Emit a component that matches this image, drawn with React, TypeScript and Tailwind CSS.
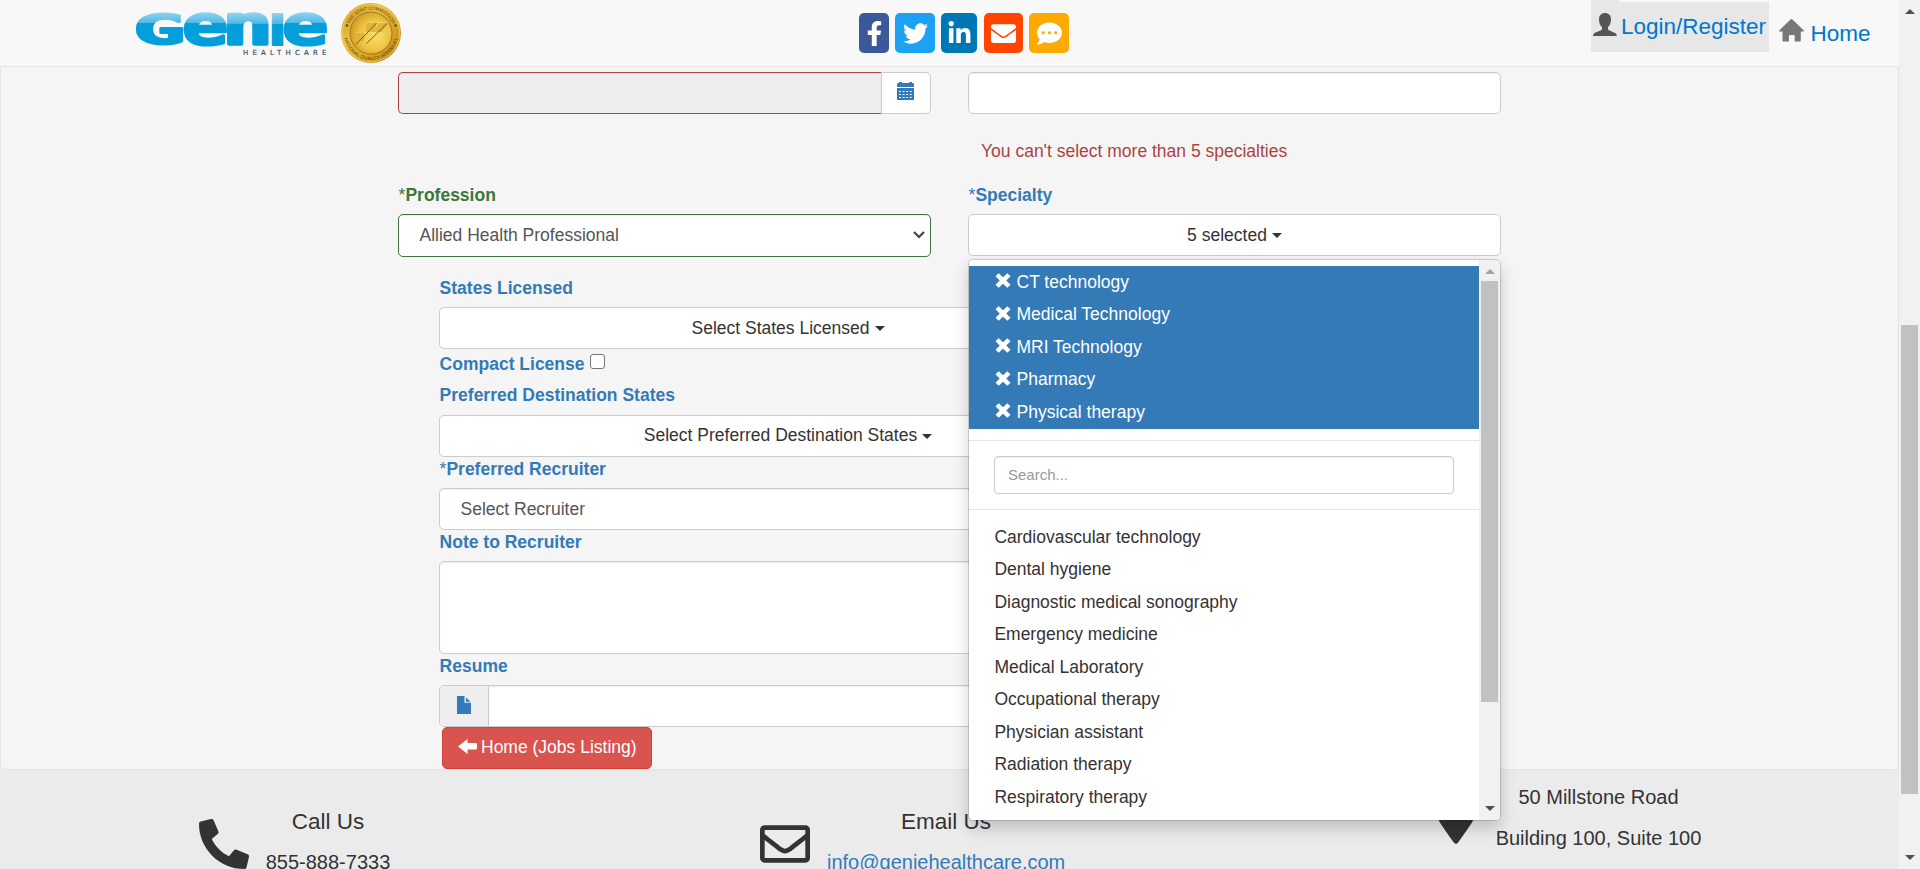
import type { ReactNode } from 'react';
import {
  FaCommentDots,
  FaEnvelope,
  FaFacebookF,
  FaLinkedinIn,
  FaPhone,
  FaRegEnvelope,
  FaTwitter,
} from 'react-icons/fa';

const selectedSpecialties = [
  'CT technology',
  'Medical Technology',
  'MRI Technology',
  'Pharmacy',
  'Physical therapy',
];

const specialties = [
  'Cardiovascular technology',
  'Dental hygiene',
  'Diagnostic medical sonography',
  'Emergency medicine',
  'Medical Laboratory',
  'Occupational therapy',
  'Physician assistant',
  'Radiation therapy',
  'Respiratory therapy',
];

function GenieLogo() {
  const letter = {
    fontFamily: 'DejaVu Sans Mono',
    fontWeight: 700,
    fontSize: 20.48,
    strokeWidth: 1,
    strokeLinejoin: 'round' as const,
  };
  const grad = (id: string, top: number) => (
    <linearGradient id={id} gradientUnits="userSpaceOnUse" x1="0" x2="0" y1={top} y2="0">
      <stop offset="0" stopColor="#8fd3ef" />
      <stop offset="0.33" stopColor="#4fb9e4" />
      <stop offset="0.34" stopColor="#049fdb" />
      <stop offset="1" stopColor="#049fdb" />
    </linearGradient>
  );
  return (
    <svg className="overflow-visible" width="196" height="50" viewBox="0 0 196 50">
      <defs>
        {grad('g1', -15.5)}
        {grad('g2', -11.8)}
        {grad('g3', -11.5)}
        {grad('g4', -15)}
      </defs>
      <g transform="translate(-131 -10)">
        <text {...letter} transform="translate(133 44.2) scale(4.25 2.03)" fill="url(#g1)" stroke="url(#g1)">G</text>
        <text {...letter} transform="translate(182 44.2) scale(3.75 2.66)" fill="url(#g2)" stroke="url(#g2)">e</text>
        <text {...letter} transform="translate(222 44.4) scale(4.15 2.72)" fill="url(#g3)" stroke="url(#g3)">n</text>
        <text {...letter} fontFamily="DejaVu Sans" transform="translate(268.6 44.6) scale(2.35 2.1)" fill="url(#g4)" stroke="url(#g4)">I</text>
        <text {...letter} transform="translate(282 44.2) scale(3.75 2.66)" fill="url(#g2)" stroke="url(#g2)">e</text>
        <text
          x="243"
          y="55"
          fontFamily="DejaVu Sans"
          fontSize="7"
          fill="#3c4650"
          stroke="#3c4650"
          strokeWidth="0.15"
          textLength="83.5"
        >
          HEALTHCARE
        </text>
      </g>
    </svg>
  );
}

function GoldSeal() {
  return (
    <svg width="60" height="60" viewBox="-30 -30 60 60">
      <defs>
        <linearGradient id="ring" x1="0" y1="0" x2="1" y2="1">
          <stop offset="0" stopColor="#c8921c" />
          <stop offset="0.35" stopColor="#e9c044" />
          <stop offset="0.6" stopColor="#dba92c" />
          <stop offset="1" stopColor="#b87f14" />
        </linearGradient>
        <radialGradient id="disc" cx="0.6" cy="0.55" r="0.6">
          <stop offset="0" stopColor="#fbe06a" />
          <stop offset="0.6" stopColor="#ecc444" />
          <stop offset="1" stopColor="#d29c22" />
        </radialGradient>
        <path id="arcTop" d="M-23.2 0A23.2 23.2 0 0 1 23.2 0" />
        <path id="arcBottom" d="M-27 0A27 27 0 0 0 27 0" />
      </defs>
      <circle r="30" fill="url(#ring)" />
      <circle r="28.6" fill="none" stroke="#f0cf62" strokeWidth="0.8" />
      <circle r="21" fill="url(#disc)" stroke="#a87616" strokeWidth="1" />
      <path d="M-5 -11h10v10h-10zM8 -10h9l-6 9h-9zM-16 -1h9v9h-5z" fill="#d9ab33" opacity="0.7" />
      <path d="M-15 11.5L5.500 -10M-4.500 10.500L16 -9.500" stroke="#6b4a10" strokeWidth="0.9" />
      <path d="M-5 -10.500H17M-15 -0.500H-4" stroke="#f7df7c" strokeWidth="0.6" />
      <text fontFamily="Liberation Sans" fontSize="4.600" fill="#5b3f0a">
        <textPath href="#arcTop" startOffset="50%" textAnchor="middle" textLength="54">
          THE JOINT COMMISSION
        </textPath>
      </text>
      <text fontFamily="Liberation Sans" fontSize="4.600" fill="#5b3f0a">
        <textPath href="#arcBottom" startOffset="50%" textAnchor="middle" textLength="74">
          NATIONAL QUALITY APPROVAL
        </textPath>
      </text>
      <circle cx="-24" cy="-7.500" r="1.300" fill="#6b4a10" />
      <circle cx="24.500" cy="-7.500" r="1.300" fill="#6b4a10" />
    </svg>
  );
}

function UserIcon() {
  return (
    <svg width="24" height="23" viewBox="0 0 24 23" fill="#555">
      <path d="M12 0c3.500 0 6 2.300 6 6.200 0 1.300-.1 2-.3 2.600-.2 2.500-1.300 4-2.700 5.200v1.500c0 1 .5 1.600 1.500 2l5 2.200c1.500.7 2.300 1.600 2.300 3V23H.2v-.5c0-1.300.8-2.200 2.300-2.900l5-2.200c1-.4 1.500-1 1.500-2V14c-1.400-1.200-2.500-2.700-2.700-5.200C6.100 8.200 6 7.500 6 6.200 6 2.300 8.500 0 12 0z" />
    </svg>
  );
}

function HomeIcon() {
  return (
    <svg width="25" height="23" viewBox="0 0 25 23" fill="#777">
      <path d="M11.500.6a1.300 1.300 0 0 1 2 0L24.600 11.300c.6.600.4 1.200-.5 1.200h-2.300v8.700c0 .8-.4 1.300-1.300 1.300h-4.800v-5.300c0-.7-.4-1.200-1.200-1.200h-3.400c-.8 0-1.200.5-1.200 1.200v5.300H4.800c-.9 0-1.300-.5-1.300-1.300v-8.700H.9c-.9 0-1.100-.6-.5-1.200z" />
    </svg>
  );
}

function CalendarIcon() {
  return (
    <svg width="17" height="18" viewBox="0 0 17 18" fill="#337ab7">
      <path d="M0 5V2.500C0 1.500.6 1 1.500 1H2V0h3v1h7V0h3v1h.5c1 0 1.500.6 1.500 1.500V5z" />
      <path
        fillRule="evenodd"
        d="M0 6h17v12H0zM2 9v1h2V9zm3.600 0v1h2V9zm3.600 0v1h2V9zm3.600 0v1h2V9zM2 12v1h2v-1zm3.600 0v1h2v-1zm3.600 0v1h2v-1zm3.600 0v1h2v-1zM2 15v1h2v-1zm3.600 0v1h2v-1zm3.600 0v1h2v-1zm3.600 0v1h2v-1z"
      />
    </svg>
  );
}

function FileIcon() {
  return (
    <svg width="14" height="18" viewBox="0 0 14 18" fill="#337ab7">
      <path d="M0 0h7.500v6.800H14V18H0z" />
      <path d="M9 1.500L13.500 5.800H9z" />
    </svg>
  );
}

function RemoveIcon() {
  return (
    <svg width="16" height="15" viewBox="0 0 16 15" fill="#fff">
      <path d="M3.700.3L8 4.300 12.300.3 15.500 3.300 11.300 7.500 15.500 11.700 12.300 14.700 8 10.700 3.700 14.700.5 11.700 4.700 7.500.5 3.300z" />
    </svg>
  );
}

function ArrowLeftIcon() {
  return (
    <svg width="19" height="15" viewBox="0 0 19 15" fill="#fff">
      <path d="M0 7.500L9.500 0v4h8.300c.6 0 1.200.5 1.200 1.200v4.100c0 .7-.5 1.200-1.200 1.200H9.500V15z" />
    </svg>
  );
}

function Caret() {
  return (
    <span className="ml-[5px] inline-block border-x-[5px] border-t-[5px] border-x-transparent border-t-[#333] align-middle" />
  );
}

function ScrollArrow({ down, muted }: { down?: boolean; muted?: boolean }) {
  return (
    <svg width="10" height="5" viewBox="0 0 10 5" fill={muted ? '#a3a3a3' : '#505050'}>
      <path d={down ? 'M0 0h10L5 5z' : 'M0 5h10L5 0z'} />
    </svg>
  );
}

function Label({ children, required, green }: { children: ReactNode; required?: boolean; green?: boolean }) {
  return (
    <div
      className={`mb-[6.25px] h-[25px] pl-[0.6px] font-bold leading-[25px] ${green ? 'text-[#3c763d]' : 'text-[#337ab7]'}`}
    >
      {required && <span className="font-normal">*</span>}
      {children}
    </div>
  );
}

function DropButton({ children }: { children: ReactNode }) {
  return (
    <button className="flex h-[42.5px] w-full items-center justify-center rounded-[5px] border border-[#ccc] bg-white text-[#333]">
      <span>
        {children}
        <Caret />
      </span>
    </button>
  );
}

function Social({ children, className }: { children: ReactNode; className: string }) {
  return <a className={`flex h-10 items-center justify-center rounded-[5px] text-[25px] text-white ${className}`}>{children}</a>;
}

function SpecialtyMenu() {
  return (
    <div className="absolute top-[45px] left-0 z-10 flex h-[562px] w-full overflow-hidden rounded-[5px] border border-black/15 bg-white bg-clip-padding shadow-[0_7.5px_15px_rgba(0,0,0,0.175)]">
      <div className="flex-1 pt-[6.25px]">
        <ul className="bg-[#337ab7] text-white">
          {selectedSpecialties.map((s) => (
            <li key={s} className="flex h-[32.5px] items-center gap-[5.5px] pl-[26px]">
              <span className="-mt-[3px]">
                <RemoveIcon />
              </span>
              <span>{s}</span>
            </li>
          ))}
        </ul>
        <hr className="mt-[11.25px] border-[#e5e5e5]" />
        <div className="mt-[15px] mr-[25px] ml-[25px] flex h-[38px] items-center rounded-[4px] border border-[#ccc] px-[13px] text-[15px] text-[#999] shadow-[inset_0_1px_1px_rgba(0,0,0,0.075)]">
          Search...
        </div>
        <hr className="mt-[15px] border-[#e5e5e5]" />
        <ul className="mt-[11px] text-[#333]">
          {specialties.map((s) => (
            <li key={s} className="flex h-[32.5px] items-center pl-[25.4px]">
              {s}
            </li>
          ))}
        </ul>
      </div>
      <div className="flex w-[21px] flex-col items-center bg-[#f1f1f1]">
        <div className="flex h-[21px] items-center pt-[3px]">
          <ScrollArrow muted />
        </div>
        <div className="h-[421px] w-[17px] bg-[#c1c1c1]" />
        <div className="mt-auto flex h-[23px] items-center">
          <ScrollArrow down />
        </div>
      </div>
    </div>
  );
}

export default function App() {
  return (
    <div className="flex h-[869px] w-[1920px] overflow-hidden bg-white font-['Liberation_Sans',Arial,sans-serif] text-[17.5px] leading-[25px] text-[#333]">
      <div className="flex w-[1899px] flex-col">
        <header className="flex h-[67px] shrink-0 items-start border-b border-[#e7e7e7] bg-[#f8f8f8]">
          <div className="flex w-[859px] pl-[131px]">
            <div className="mt-[10px] w-[210px]">
              <GenieLogo />
            </div>
            <div className="mt-[3px]">
              <GoldSeal />
            </div>
          </div>
          <div className="mt-[13px] flex w-[732px] gap-[6px]">
            <Social className="w-[30px] bg-[#3b5998]"><FaFacebookF /></Social>
            <Social className="w-10 bg-[#1da1f2]"><FaTwitter /></Social>
            <Social className="w-9 bg-[#0077b5]"><FaLinkedinIn /></Social>
            <Social className="ml-px w-[39px] bg-[#ff4500]"><FaEnvelope /></Social>
            <Social className="w-10 bg-[#ffaa00]"><FaCommentDots /></Social>
          </div>
          <nav className="flex text-[22.5px] leading-[32px] text-[#0077cc]">
            <div className="w-[178px]">
              <div className="h-[2px] w-7 bg-[#e7e7e7]" />
              <a className="flex h-[50px] gap-[4px] bg-[#e7e7e7] pl-[2px]">
                <span className="mt-[11px]"><UserIcon /></span>
                <span className="mt-[9px]">Login/Register</span>
              </a>
            </div>
            <a className="ml-[10px] flex gap-[6.500px]">
              <span className="mt-[19px]"><HomeIcon /></span>
              <span className="mt-[18px]">Home</span>
            </a>
          </nav>
        </header>

        <main className="h-[703px] shrink-0 bg-[#ebebeb]">
          <div className="h-full rounded-b-[5px] border border-t-0 border-[#e3e3e3] bg-[#f5f5f5] pt-[5px] pl-[397px]">
            <div className="flex gap-[37px]">
              <div className="w-[533px]">
                <div className="flex h-[42px]">
                  <div className="flex-1 rounded-l-[5px] border border-r-0 border-[#a94442] bg-[#eee] shadow-[inset_0_1px_1px_rgba(0,0,0,0.075)]" />
                  <div className="flex w-[50px] justify-center rounded-r-[5px] border border-[#ccc] bg-white pt-[9px] pr-[2px]">
                    <CalendarIcon />
                  </div>
                </div>
                <div className="mt-[68.5px]">
                  <Label required green>Profession</Label>
                  <div className="flex h-[43px] items-center justify-between rounded-[5px] border border-[#3c763d] bg-white pr-[5px] pl-[20.5px] text-[#555] shadow-[inset_0_1px_1px_rgba(0,0,0,0.075)]">
                    <span className="pt-px">Allied Health Professional</span>
                    <svg width="12" height="8" viewBox="0 0 12 8" fill="none" stroke="#444" strokeWidth="2.200">
                      <path d="M1 1l5 5 5-5" />
                    </svg>
                  </div>
                </div>
              </div>
              <div className="w-[533px]">
                <div className="h-[42px] rounded-[5px] border border-[#ccc] bg-white shadow-[inset_0_1px_1px_rgba(0,0,0,0.075)]" />
                <p className="mt-[24.5px] pl-[13px] text-[#a94442]">You can't select more than 5 specialties</p>
                <div className="mt-[19px]">
                  <Label required>Specialty</Label>
                  <div className="relative">
                    <DropButton>5 selected</DropButton>
                    <SpecialtyMenu />
                  </div>
                </div>
              </div>
            </div>

            <div className="mt-[18.75px] ml-[41px] w-[698px]">
              <Label>States Licensed</Label>
              <DropButton>Select States Licensed</DropButton>
              <div className="flex h-[34px] pt-[2px] pl-[0.6px] font-bold text-[#337ab7]">
                <span className="mt-px">Compact License</span>
                <span className="mt-[3px] ml-[5px] h-[15px] w-[15px] rounded-[3px] border border-[#767676] bg-white" />
              </div>
              <Label>Preferred Destination States</Label>
              <DropButton>Select Preferred Destination States</DropButton>
              <Label required>Preferred Recruiter</Label>
              <div className="flex h-[41.5px] items-center rounded-[5px] border border-[#ccc] bg-white pl-[20.5px] text-[#555] shadow-[inset_0_1px_1px_rgba(0,0,0,0.075)]">
                Select Recruiter
              </div>
              <Label>Note to Recruiter</Label>
              <div className="h-[92.5px] rounded-[5px] border border-[#ccc] bg-white shadow-[inset_0_1px_1px_rgba(0,0,0,0.075)]" />
              <Label>Resume</Label>
              <div className="flex h-[42px] overflow-hidden rounded-[5px] border border-[#ccc] bg-white">
                <div className="flex w-[49px] justify-center border-r border-[#ccc] bg-[#eee] pt-[10px]">
                  <FileIcon />
                </div>
                <div className="flex-1 shadow-[inset_0_1px_1px_rgba(0,0,0,0.075)]" />
              </div>
              <button className="ml-[3px] flex h-[42px] w-[210px] items-center gap-[4px] rounded-[5px] border border-[#d43f3a] bg-[#d9534f] pl-[15px] text-white">
                <span className="-mt-[3px]"><ArrowLeftIcon /></span>
                <span>Home (Jobs Listing)</span>
              </button>
            </div>
          </div>
        </main>

        <footer className="flex h-[99px] shrink-0 overflow-hidden bg-[#ebebeb] text-[20px] leading-[28px]">
          <div className="flex pl-[199px]">
            <FaPhone className="mt-[49px] -scale-x-100 text-[50px]" />
            <div className="ml-[16px] w-[126px] text-center">
              <h4 className="mt-[36px] text-[22.5px] leading-[32px]">Call Us</h4>
              <p className="mt-[10px] whitespace-nowrap">855-888-7333</p>
            </div>
          </div>
          <div className="flex w-[1046px] pl-[369px]">
            <FaRegEnvelope className="mt-[49px] text-[50px]" />
            <div className="ml-[17px] w-[238px] text-center">
              <h4 className="mt-[36px] text-[22.5px] leading-[32px]">Email Us</h4>
              <p className="mt-[10px] whitespace-nowrap text-[#337ab7]">info@geniehealthcare.com</p>
            </div>
          </div>
          <div className="flex">
            <svg className="mt-[23px]" width="38" height="51" viewBox="0 0 384 512" fill="#333">
              <path d="M172.300 501.700C27 291 0 269.400 0 192 0 86 86 0 192 0s192 86 192 192c0 77.400-27 99-172.300 309.700-9.500 13.800-29.900 13.800-39.400 0z" />
            </svg>
            <div className="ml-[20px] w-[207px] pt-[13px] text-center leading-[41px]">
              <p className="-mt-[6px]">50 Millstone Road</p>
              <p className="whitespace-nowrap">Building 100, Suite 100</p>
            </div>
          </div>
        </footer>
      </div>

      <div className="flex w-[21px] flex-col items-center bg-[#f1f1f1]">
        <div className="flex h-[325px] items-start pt-[9px]">
          <ScrollArrow />
        </div>
        <div className="h-[469px] w-[17px] bg-[#c1c1c1]" />
        <div className="mt-auto flex pb-[9px]">
          <ScrollArrow down />
        </div>
      </div>
    </div>
  );
}
